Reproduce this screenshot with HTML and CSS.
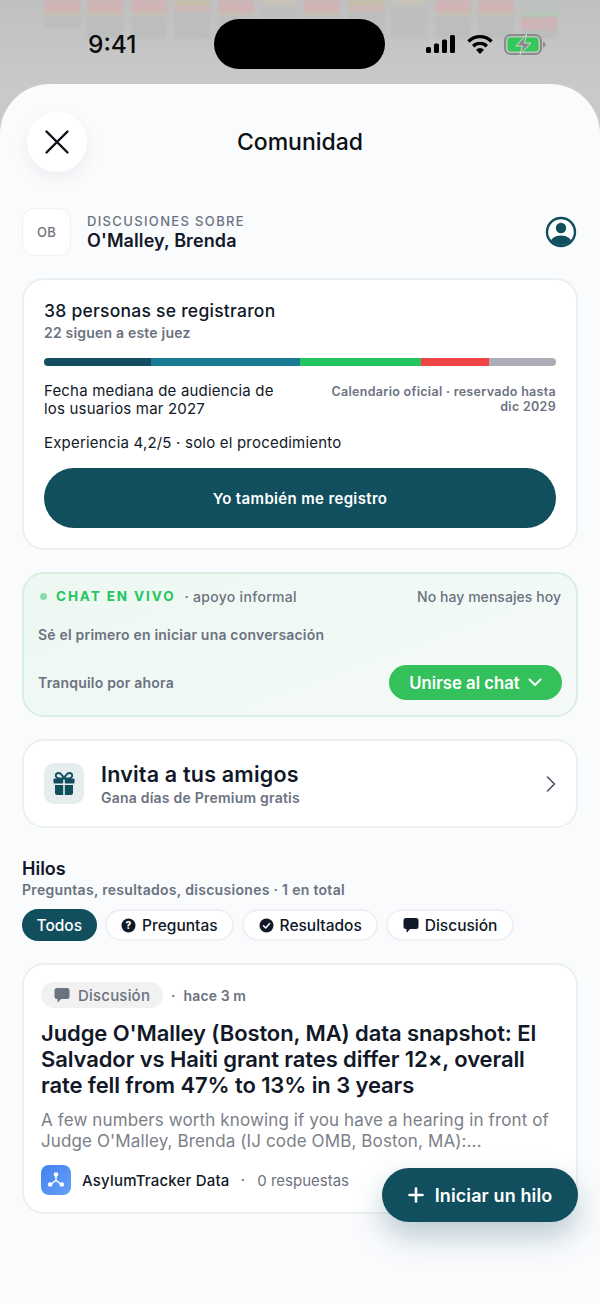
FILE: index.html
```html
<!DOCTYPE html>
<html lang="es">
<head>
<meta charset="utf-8">
<title>Comunidad</title>
<link rel="stylesheet" href="styles.css">
</head>
<body>
<div class="screen">
  <div class="backdrop">
    <i class="col h28"></i><i class="col h36"></i><i class="col h36"></i><i class="col h36 warm"></i><i class="col h32"></i><i class="col h36 pale"></i><i class="col h36"></i><i class="col h36 warm"></i><i class="col h36 pale"></i><i class="col h36"></i><i class="col h36"></i><i class="col h36 green"></i>
  </div>
  <div class="status">
    <span class="time">9:41</span>
    <div class="island"></div>
    <div class="status-icons">
      <svg width="30" height="18" viewBox="0 0 30 18"><rect x="0" y="12" width="5" height="6" rx="1.5"/><rect x="8" y="8.5" width="5" height="9.5" rx="1.5"/><rect x="16" y="4.5" width="5" height="13.5" rx="1.5"/><rect x="24" y="0" width="5" height="18" rx="1.5"/></svg>
      <svg width="26" height="20" viewBox="0 0 26 20" fill="none" stroke="#000" stroke-width="3.4"><path d="M1.500 7.500a16 16 0 0 1 23 0"/><path d="M6.200 12.200a9.600 9.600 0 0 1 13.600 0"/><path d="M13 20l-4-4.200a5.600 5.600 0 0 1 8 0z" fill="#000" stroke="none"/></svg>
      <svg width="42" height="21" viewBox="0 0 42 21"><rect x="1" y="1" width="36" height="19" rx="5.5" fill="none" stroke="#8b8b8b" stroke-width="2"/><rect x="3.5" y="3.5" width="31" height="14" rx="3.5" fill="#35c759"/><path d="M39 7.5c1.600.4 2.400 1.500 2.400 3s-.8 2.600-2.400 3z" fill="#8b8b8b"/><path d="M22.500 0.500 12 12h6.500l-2.500 8.500L27 9h-6.500z" fill="#8b8b8b" stroke="#c6e8cf" stroke-width="1"/></svg>
    </div>
  </div>

  <main class="sheet">
    <header class="topbar">
      <button class="close" aria-label="Cerrar">
        <svg width="26" height="26" viewBox="0 0 26 26" fill="none" stroke="#0b0f14" stroke-width="2.4" stroke-linecap="round"><path d="M2.500 2.500l21 21M23.500 2.500l-21 21"/></svg>
      </button>
      <h1 class="title">Comunidad</h1>
    </header>

    <section class="judge">
      <div class="initials">OB</div>
      <div class="judge-text">
        <div class="eyebrow">DISCUSIONES SOBRE</div>
        <div class="judge-name">O'Malley, Brenda</div>
      </div>
      <svg class="user" width="32" height="32" viewBox="0 0 32 32"><defs><clipPath id="uc"><circle cx="16" cy="16" r="13"/></clipPath></defs><circle cx="16" cy="16" r="14" fill="#fff" stroke="#114e5e" stroke-width="2.4"/><circle cx="16" cy="12" r="5.200" fill="#114e5e"/><ellipse cx="16" cy="27" rx="11" ry="7.600" fill="#114e5e" clip-path="url(#uc)"/></svg>
    </section>

    <section class="card register">
      <div class="reg-title">38 personas se registraron</div>
      <div class="reg-sub">22 siguen a este juez</div>
      <div class="bar">
        <span class="s1"></span><span class="s2"></span><span class="s3"></span><span class="s4"></span><span class="s5"></span>
      </div>
      <div class="dates">
        <div class="median">Fecha mediana de audiencia de los usuarios mar 2027</div>
        <div class="official">Calendario oficial · reservado hasta dic 2029</div>
      </div>
      <div class="experience">Experiencia 4,2/5 · solo el procedimiento</div>
      <button class="primary">Yo también me registro</button>
    </section>

    <section class="chat">
      <div class="chat-top">
        <span class="dot"></span>
        <span class="live">CHAT EN VIVO</span>
        <span class="informal">· apoyo informal</span>
        <span class="nomsg">No hay mensajes hoy</span>
      </div>
      <div class="first">Sé el primero en iniciar una conversación</div>
      <div class="chat-bottom">
        <span class="quiet">Tranquilo por ahora</span>
        <button class="join">Unirse al chat
          <svg width="14" height="9" viewBox="0 0 14 9" fill="none" stroke="#fff" stroke-width="1.900" stroke-linecap="round" stroke-linejoin="round"><path d="M1.500 1.500 7 7l5.500-5.500"/></svg>
        </button>
      </div>
    </section>

    <section class="card invite">
      <div class="gift">
        <svg width="22" height="24" viewBox="0 0 22 24" fill="#114e5e"><path d="M11 6.500C9 2.500 7.500 1 5.500 1 3.700 1 2.800 2.300 2.800 3.600c0 1.600 1.200 2.900 3.400 2.900H11zm0 0c2-4 3.500-5.500 5.500-5.500 1.800 0 2.700 1.300 2.700 2.600 0 1.600-1.200 2.900-3.400 2.900H11z" fill="none" stroke="#114e5e" stroke-width="1.800"/><rect x="0.500" y="6.500" width="9.700" height="5" rx="1"/><rect x="11.800" y="6.500" width="9.700" height="5" rx="1"/><path d="M2 13h8.200v10H4a2 2 0 0 1-2-2zM11.800 13H20v8a2 2 0 0 1-2 2h-6.200z"/></svg>
      </div>
      <div class="invite-text">
        <div class="invite-title">Invita a tus amigos</div>
        <div class="invite-sub">Gana días de Premium gratis</div>
      </div>
      <svg class="chev" width="10" height="16" viewBox="0 0 10 16" fill="none" stroke="#4b5563" stroke-width="1.600" stroke-linecap="round" stroke-linejoin="round"><path d="M1.500 1 8.500 8l-7 7"/></svg>
    </section>

    <section class="threads">
      <h2 class="threads-title">Hilos</h2>
      <div class="threads-sub">Preguntas, resultados, discusiones · 1 en total</div>
      <div class="chips">
        <span class="chip active">Todos</span>
        <span class="chip">
          <svg width="15" height="15" viewBox="0 0 15 15"><circle cx="7.500" cy="7.500" r="7" fill="#111827"/><text x="7.500" y="11" class="qmark">?</text></svg>
          Preguntas</span>
        <span class="chip">
          <svg width="15" height="15" viewBox="0 0 15 15"><circle cx="7.500" cy="7.500" r="7" fill="#111827"/><path d="M4.500 7.800 6.700 10l3.900-4.500" fill="none" stroke="#fff" stroke-width="1.500" stroke-linecap="round" stroke-linejoin="round"/></svg>
          Resultados</span>
        <span class="chip">
          <svg width="16" height="16" viewBox="0 0 16 16"><path d="M3 1h10a2.500 2.500 0 0 1 2.500 2.500v6A2.500 2.500 0 0 1 13 12H7l-2.800 3.200c-.3.300-.7.100-.7-.3V12H3A2.500 2.500 0 0 1 .5 9.500v-6A2.500 2.500 0 0 1 3 1z" fill="#111827"/></svg>
          Discusión</span>
      </div>
    </section>

    <article class="card thread">
      <div class="thread-meta">
        <span class="badge">
          <svg width="16" height="16" viewBox="0 0 16 16"><path d="M3 1h10a2.500 2.500 0 0 1 2.500 2.500v6A2.500 2.500 0 0 1 13 12H7l-2.800 3.200c-.3.300-.7.100-.7-.3V12H3A2.500 2.500 0 0 1 .5 9.500v-6A2.500 2.500 0 0 1 3 1z" fill="#6b7280"/></svg>
          Discusión</span>
        <span class="ago-dot">·</span>
        <span class="ago">hace 3 m</span>
      </div>
      <h3 class="thread-title">Judge O'Malley (Boston, MA) data snapshot: El Salvador vs Haiti grant rates differ 12×, overall rate fell from 47% to 13% in 3 years</h3>
      <p class="thread-body">A few numbers worth knowing if you have a hearing in front of Judge O'Malley, Brenda (IJ code OMB, Boston, MA):...</p>
      <div class="thread-foot">
        <span class="avatar">
          <svg width="20" height="20" viewBox="0 0 20 20" fill="#fff" stroke="#fff"><path d="M10 4.500v6M10 10.500l-5.500 4M10 10.500l5.500 4" stroke-width="1.500" fill="none"/><circle cx="10" cy="4.500" r="2.300" stroke="none"/><circle cx="4.200" cy="14.500" r="2.300" stroke="none"/><circle cx="15.800" cy="14.500" r="2.300" stroke="none"/></svg>
        </span>
        <span class="author">AsylumTracker Data</span>
        <span class="sep">·</span>
        <span class="replies">0 respuestas</span>
      </div>
    </article>
  </main>

  <button class="fab">
    <svg width="16" height="16" viewBox="0 0 16 16" fill="none" stroke="#fff" stroke-width="2.600" stroke-linecap="round"><path d="M8 1.500v13M1.500 8h13"/></svg>
    Iniciar un hilo
  </button>
</div>
</body>
</html>
```

FILE: styles.css
```css
* { box-sizing: border-box; margin: 0; padding: 0; }
html, body { width: 600px; height: 1304px; overflow: hidden; }
body { font-family: Inter, "Noto Sans", sans-serif; color: #111827; background: #c7c7c7; }
button { font-family: inherit; border: 0; }

.screen { position: relative; width: 600px; height: 1304px; overflow: hidden; background: linear-gradient(#bfc0c0, #c9c9c9 84px); }

.backdrop { position: absolute; top: 0; left: 44px; display: flex; gap: 7.400px; filter: blur(1.500px); }
.col { display: block; width: 36px; background: linear-gradient(#d0b4b6 0 12px, #c9c0ae 12px 15px, #bcbebe 15px); }
.h28 { height: 28px; }
.h32 { height: 32px; }
.h36 { height: 38px; }
.warm { background: linear-gradient(#c4bfa8 0 5px, #cbb7b3 5px 12px, #bcbebe 12px); }
.pale { background: linear-gradient(#c9c2b8 0 5px, #bdbfbf 5px); }
.green { background: linear-gradient(#bfc1c1 0 12px, #b4c6b8 12px 17px, #cdb4b6 17px 30px, #bcbebe 30px); }

.status { position: relative; height: 84px; }
.time { position: absolute; left: 88px; top: 30px; font-size: 24.500px; line-height: 29px; font-weight: 500; color: #0b0b0b; }
.island { position: absolute; left: 214px; top: 19px; width: 171px; height: 50px; border-radius: 25px; background: #000; }
.status-icons { position: absolute; left: 426px; top: 33px; display: flex; align-items: center; gap: 11px; height: 22px; }

.sheet { position: relative; height: 1220px; padding: 28px 22px 0; background: #fafbfd; border-radius: 50px 50px 0 0; display: flex; flex-direction: column; gap: 22px; }

.topbar { position: relative; height: 60px; margin-bottom: 14px; display: flex; align-items: center; justify-content: center; }
.close { position: absolute; left: 5px; top: 0; width: 60px; height: 60px; border-radius: 50%; background: #fff; box-shadow: 0 6px 18px rgba(17, 24, 39, .06); display: flex; align-items: center; justify-content: center; }
.title { font-size: 23px; line-height: 28px; font-weight: 500; color: #0b0f14; }

.judge { display: flex; align-items: center; height: 48px; }
.initials { width: 49px; height: 48px; border-radius: 12px; background: #fff; border: 1px solid #eef0f3; display: flex; align-items: center; justify-content: center; font-size: 13px; font-weight: 500; color: #6b7280; letter-spacing: .3px; }
.judge-text { flex: 1; margin-left: 16px; padding-top: 1px; }
.eyebrow { font-size: 13px; line-height: 16px; font-weight: 500; color: #6b7280; letter-spacing: 1.350px; }
.judge-name { font-size: 18px; line-height: 24px; font-weight: 600; color: #111827; letter-spacing: .1px; }
.user { margin-right: 1px; }

.card { background: #fff; border: 2px solid #edf0f2; border-radius: 22px; }

.register { height: 272px; padding: 19px 20px 0; }
.reg-title { font-size: 17.500px; line-height: 24px; font-weight: 500; color: #111827; letter-spacing: .25px; }
.reg-sub { font-size: 14px; line-height: 20px; font-weight: 600; color: #6b7280; letter-spacing: .2px; }
.bar { display: flex; height: 8px; margin-top: 15px; border-radius: 4px; overflow: hidden; }
.bar span { display: block; height: 100%; }
.s1 { width: 107px; background: #124e5f; }
.s2 { width: 149px; background: #1a7a94; }
.s3 { width: 121px; background: #22c55e; }
.s4 { width: 68px; background: #ef4444; }
.s5 { width: 67px; background: #adadb8; }
.dates { display: flex; justify-content: space-between; margin-top: 16px; }
.median { width: 245px; font-size: 15px; line-height: 18px; font-weight: 400; color: #111827; letter-spacing: .18px; }
.official { width: 240px; padding-top: 2px; text-align: right; font-size: 12.500px; line-height: 15px; font-weight: 600; color: #6b7280; letter-spacing: .3px; }
.experience { margin-top: 16px; font-size: 15px; line-height: 18px; color: #111827; letter-spacing: .2px; }
.primary { display: block; width: 100%; height: 60px; margin-top: 16px; border-radius: 30px; background: #114e5e; color: #fff; font-size: 15px; font-weight: 600; letter-spacing: .35px; }

.chat { height: 145px; padding: 12px 14px 0; border: 2px solid #d8efe1; border-radius: 22px; background: linear-gradient(160deg, #edf8f2, #f5faf9); display: flex; flex-direction: column; }
.chat-top { display: flex; align-items: center; height: 20px; margin-right: 1px; }
.dot { width: 7px; height: 7px; margin-left: 2px; border-radius: 50%; background: #86dca6; }
.live { margin-left: 9px; font-size: 13.500px; font-weight: 700; color: #22c55e; letter-spacing: 1.900px; }
.informal { margin-left: 9px; font-size: 14px; font-weight: 500; color: #6b7280; letter-spacing: .3px; }
.nomsg { margin-left: auto; font-size: 14px; font-weight: 500; color: #6b7280; letter-spacing: .05px; }
.first { margin-top: 19px; font-size: 14px; line-height: 20px; font-weight: 600; color: #6b7280; letter-spacing: .2px; }
.chat-bottom { display: flex; justify-content: space-between; align-items: center; margin-top: 20px; }
.quiet { font-size: 14px; font-weight: 600; color: #6b7280; letter-spacing: .2px; }
.join { display: flex; align-items: center; gap: 8px; width: 173px; height: 35px; justify-content: center; border-radius: 18px; background: #34c15c; color: #fff; font-size: 16.700px; font-weight: 600; }

.invite { height: 89px; padding: 0 20px; display: flex; align-items: center; }
.gift { width: 40px; height: 41px; border-radius: 10px; background: #e5edef; display: flex; align-items: center; justify-content: center; }
.invite-text { flex: 1; margin-left: 17px; padding-top: 2px; }
.invite-title { font-size: 21.500px; line-height: 27px; font-weight: 600; color: #111827; letter-spacing: .2px; }
.invite-sub { font-size: 14px; line-height: 20px; font-weight: 600; color: #6b7280; letter-spacing: .22px; }
.chev { margin-right: 0; }

.threads { margin-top: 8px; }
.threads-title { font-size: 18px; line-height: 22px; font-weight: 600; color: #111827; }
.threads-sub { font-size: 14px; line-height: 20px; font-weight: 600; color: #6b7280; letter-spacing: .3px; }
.chips { display: flex; gap: 8px; margin-top: 9px; }
.chip { display: flex; align-items: center; gap: 6px; height: 32px; padding: 0 14.500px; border-radius: 16px; background: #fff; border: 2px solid #eef0f3; font-size: 15.500px; font-weight: 500; color: #111827; }
.chip.active { padding: 0 12.500px; background: #114e5e; border-color: #114e5e; color: #fff; }
.qmark { font-size: 10px; font-weight: 800; fill: #fff; text-anchor: middle; }

.thread { height: 251px; padding: 17px 17px 0; }
.thread-meta { display: flex; align-items: center; height: 26px; }
.badge { display: flex; align-items: center; gap: 8px; height: 26px; padding: 0 13px; border-radius: 13px; background: #f1f1f2; font-size: 15px; font-weight: 500; color: #6b7280; letter-spacing: .2px; }
.ago-dot { margin-left: 8px; font-size: 14px; font-weight: 600; color: #6b7280; }
.ago { margin-left: 8px; font-size: 14px; font-weight: 600; color: #6b7280; letter-spacing: .1px; }
.thread-title { margin-top: 12px; font-size: 22px; line-height: 26px; font-weight: 600; color: #111827; letter-spacing: -.1px; }
.thread-body { margin-top: 12px; font-size: 17px; line-height: 21px; font-weight: 400; color: #7b8088; letter-spacing: .12px; }
.thread-foot { display: flex; align-items: center; margin-top: 13px; height: 30px; }
.avatar { display: flex; align-items: center; justify-content: center; width: 30px; height: 30px; border-radius: 8px; background: linear-gradient(135deg, #3f82ef, #69a0f7); }
.author { margin-left: 11px; font-size: 15px; font-weight: 500; color: #111827; letter-spacing: .2px; }
.sep { margin-left: 11px; color: #6b7280; }
.replies { margin-left: 12px; font-size: 15px; color: #6b7280; }

.fab { position: absolute; left: 382px; top: 1168px; width: 196px; height: 54px; border-radius: 27px; background: #114e5e; color: #fff; font-size: 18px; font-weight: 600; letter-spacing: .12px; display: flex; align-items: center; justify-content: center; gap: 11px; box-shadow: 0 14px 30px rgba(17, 78, 94, .28); }
```
